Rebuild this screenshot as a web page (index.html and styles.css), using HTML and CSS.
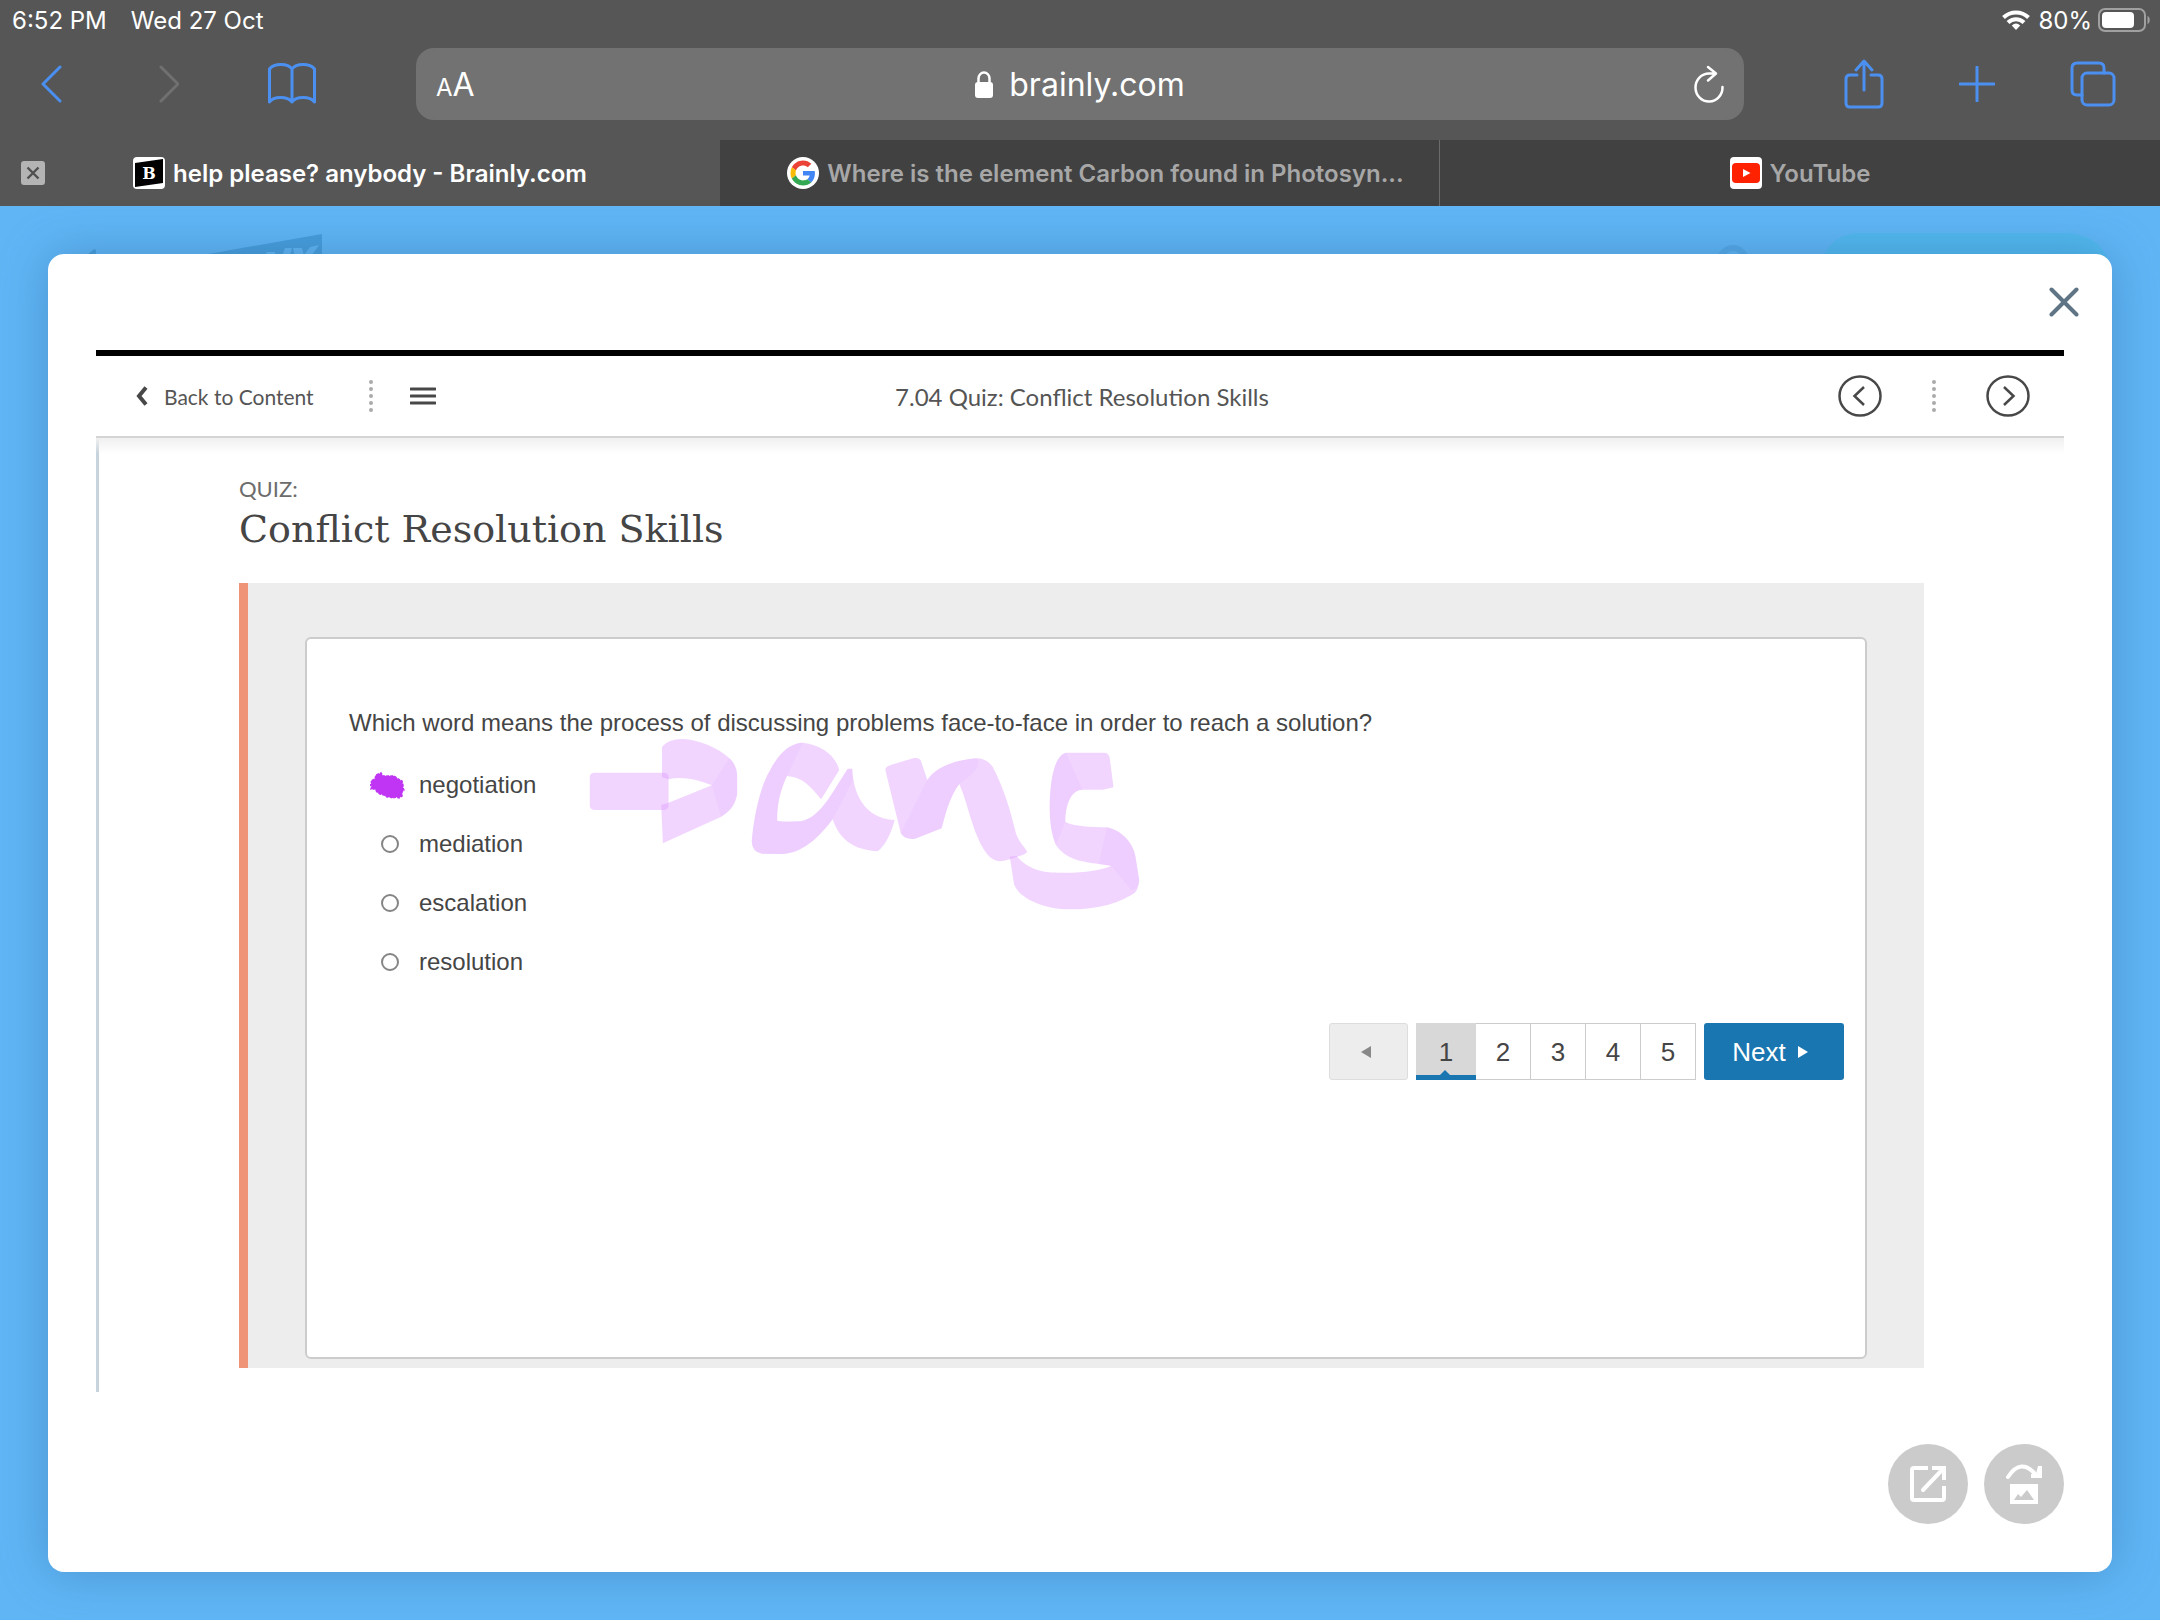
FILE: index.html
```html
<!DOCTYPE html>
<html lang="en">
<head>
<meta charset="utf-8">
<title>help please? anybody - Brainly.com</title>
<meta name="viewport" content="width=device-width, initial-scale=1">
<link rel="stylesheet" href="styles.css">
</head>
<body>
<header class="browser">
  <div class="status">
    <span class="status-time">6:52 PM</span>
    <span>Wed 27 Oct</span>
    <span class="status-right">
      <svg width="28" height="20" viewBox="0 0 28 20" fill="none" stroke="#fff" stroke-width="4"><path d="M1.500 7.500a18 18 0 0 1 25 0"/><path d="M6 12.500a11.500 11.500 0 0 1 16 0"/><path d="M14 20l-4.200-4.600a6.500 6.500 0 0 1 8.400 0z" fill="#fff" stroke="none"/></svg>
      <span class="status-percent">80%</span>
      <svg width="54" height="24" viewBox="0 0 54 24"><rect x="1" y="1" width="46" height="22" rx="6" fill="none" stroke="#a0a0a0" stroke-width="2"/><rect x="4" y="4" width="32" height="16" rx="4" fill="#fff"/><path d="M49.500 8c3 1 3 7 0 8z" fill="#a0a0a0"/></svg>
    </span>
  </div>
  <nav class="toolbar" aria-label="Browser">
    <div class="tools tools-left">
      <button class="tool" aria-label="Back"><svg width="22" height="38" viewBox="0 0 22 38"><path d="M20 2L3 19l17 17"/></svg></button>
      <button class="tool tool-off" aria-label="Forward"><svg width="28" height="38" viewBox="-8 0 28 38"><path d="M2 2l17 17L2 36"/></svg></button>
      <button class="tool" aria-label="Bookmarks"><svg width="48" height="42" viewBox="0 0 48 42"><path d="M24 6C20 0 6 0 1.500 6v33c4-6 18-6 22.500 0 4-6 18-6 22.500 0V6C42 0 28 0 24 6zV39"/></svg></button>
    </div>
    <div class="address">
      <button class="text-size" aria-label="Text size"><span class="small-a">A</span>A</button>
      <a class="site" href="#"><svg width="18" height="27" viewBox="0 0 18 27"><rect y="11" width="18" height="16" rx="3" fill="#fff"/><path d="M3.500 12V7.500a5.500 6 0 0 1 11 0V12" fill="none" stroke="#fff" stroke-width="2.500"/></svg>brainly.com</a>
      <button class="reload" aria-label="Reload"><svg width="30" height="38" viewBox="0 0 30 38" fill="none" stroke="#fff" stroke-width="2.500" stroke-linecap="round" stroke-linejoin="round"><path d="M28.500 22A13.500 14 0 1 1 15 8.500h6M14 2l8 6.500-8 7"/></svg></button>
    </div>
    <div class="tools tools-right">
      <button class="tool" aria-label="Share"><svg width="40" height="50" viewBox="0 0 40 50"><path d="M13 16H6q-4 0-4 4v24q0 4 4 4h28q4 0 4-4V20q0-4-4-4h-7M20 31V3m-8 8l8-9 8 9"/></svg></button>
      <button class="tool" aria-label="New tab"><svg width="36" height="36" viewBox="0 0 36 36"><path d="M18 1v34M1 18h34"/></svg></button>
      <button class="tool" aria-label="Show tabs"><svg width="46" height="46" viewBox="0 0 46 46"><rect x="12" y="12" width="32" height="32" rx="5"/><path d="M12 34H7q-5 0-5-5V7q0-5 5-5h22q5 0 5 5v5"/></svg></button>
    </div>
  </nav>
  <div class="tabs">
    <div class="tab tab-active">
      <button class="tab-close" aria-label="Close tab"><svg width="24" height="24" viewBox="0 0 24 24"><rect width="24" height="24" rx="3" fill="#b4b4b4"/><path d="M6.500 6.500l11 11m0-11l-11 11" stroke="#505050" stroke-width="2.400"/></svg></button>
      <a class="tab-link" href="#"><svg class="favicon" viewBox="0 0 32 32"><rect width="32" height="32" rx="4" fill="#fff"/><path d="M2 6l28-4v24L2 30z"/><text class="favicon-letter" x="16" y="22" text-anchor="middle">B</text></svg><span class="tab-name">help please? anybody - Brainly.com</span></a>
    </div>
    <div class="tab tab-long">
      <a class="tab-link" href="#"><svg class="favicon" viewBox="0 0 32 32"><circle cx="16" cy="16" r="16" fill="#fff"/><g transform="translate(3.500 3.500) scale(.52)"><path fill="#ea4335" d="M24 9.500c3.540 0 6.710 1.220 9.210 3.600l6.850-6.850C35.900 2.380 30.470 0 24 0 14.620 0 6.510 5.380 2.560 13.220l7.980 6.190C12.430 13.720 17.740 9.500 24 9.500z"/><path fill="#4285f4" d="M46.980 24.550c0-1.570-.15-3.090-.38-4.550H24v9.020h12.940c-.58 2.960-2.260 5.480-4.780 7.180l7.730 6c4.510-4.180 7.090-10.360 7.090-17.650z"/><path fill="#fbbc05" d="M10.530 28.590c-.48-1.450-.76-2.990-.76-4.590s.27-3.140.76-4.590l-7.980-6.190C.92 16.460 0 20.120 0 24c0 3.880.92 7.540 2.560 10.780z"/><path fill="#34a853" d="M24 48c6.480 0 11.930-2.130 15.890-5.810l-7.730-6c-2.150 1.450-4.920 2.300-8.160 2.300-6.260 0-11.570-4.220-13.470-9.910l-7.980 6.190C6.510 42.620 14.620 48 24 48z"/></g></svg><span class="tab-name">Where is the element Carbon found in Photosyn...</span></a>
    </div>
    <div class="tab">
      <a class="tab-link" href="#"><svg class="favicon" viewBox="0 0 32 32"><rect width="32" height="32" rx="4" fill="#fff"/><rect x="2" y="6" width="28" height="20" rx="4" fill="#f20"/><path d="M13 12l7.500 4-7.500 4z" fill="#fff"/></svg><span class="tab-name">YouTube</span></a>
    </div>
  </div>
</header>

<div class="page">
  <div class="behind" aria-hidden="true">
    <svg class="behind-logo" width="240" height="28" viewBox="0 0 240 28"><path d="M2 22l8-7 2 1v12zM79 28L238 0v28z" fill="#479edb"/><path d="M176 28l7-10h8l-1 10zM196 28l5-14h7l-4 14zM212 28l-3-14h9l2 7 6-8 9-2-12 17z" fill="#60b5f2"/></svg>
    <svg class="behind-right" width="398" height="40" viewBox="0 0 398 40"><circle cx="19" cy="28" r="13" fill="none" stroke="#55a9e6" stroke-width="6"/><path d="M104 40C108 14 124 0 146 0h204c26 0 44 14 48 40z" fill="#52b9ee"/></svg>
  </div>
  <main class="modal">
    <button class="modal-close" aria-label="Close"><svg width="30" height="30" viewBox="0 0 30 30"><path d="M2.500 2.500l25 25m0-25l-25 25" stroke="#5f7585" stroke-width="4" stroke-linecap="round"/></svg></button>
    <article class="lesson">
      <div class="lesson-bar">
        <div class="lesson-left">
          <a class="back" href="#"><svg width="14" height="20" viewBox="0 0 14 20"><path d="M12 1.500L5 10l7 8.500" fill="none" stroke="#484848" stroke-width="4"/></svg>Back to Content</a>
          <svg class="dots" width="4" height="32" viewBox="0 0 4 32"><path d="M2 2v30" stroke-dasharray="0 7"/></svg>
          <button class="plain" aria-label="Menu"><svg width="26" height="18" viewBox="0 0 26 18"><path d="M1 2h24M1 9h24M1 16h24" stroke="#484848" stroke-width="3" stroke-linecap="round"/></svg></button>
        </div>
        <h2 class="lesson-title">7.04 Quiz: Conflict Resolution Skills</h2>
        <div class="lesson-right">
          <button class="plain" aria-label="Previous lesson"><svg width="44" height="42" viewBox="0 0 44 42" fill="none" stroke="#484848" stroke-width="2.500"><ellipse cx="22" cy="21" rx="20.500" ry="19.500"/><path d="M26 12l-9.500 9L26 30"/></svg></button>
          <svg class="dots" width="4" height="32" viewBox="0 0 4 32"><path d="M2 2v30" stroke-dasharray="0 7"/></svg>
          <button class="plain" aria-label="Next lesson"><svg width="44" height="42" viewBox="0 0 44 42" fill="none" stroke="#484848" stroke-width="2.500"><ellipse cx="22" cy="21" rx="20.500" ry="19.500"/><path d="M18 12l9.500 9L18 30"/></svg></button>
        </div>
      </div>
      <div class="lesson-body">
        <p class="kicker">QUIZ:</p>
        <h1 class="heading">Conflict Resolution Skills</h1>
        <section class="quiz">
          <form class="card">
            <fieldset class="question">
              <legend class="prompt">Which word means the process of discussing problems face-to-face in order to reach a solution?</legend>
              <label class="option"><input class="radio" type="radio" name="answer" checked>negotiation
                <svg class="scribble" width="36" height="28" viewBox="0 0 36 28"><path d="M2 13l-1-3 4-2 1-4 5-2 2 3 6 0 5 0 4 3 4 2 1 4 0 3 1 2-2 2 0 4-3 2-3-1-3 1-3-1-3 0-3-2-4-1-3-2-2-3-4 0 1-3-3-1z" fill="#bf35f3" stroke="#bf35f3" stroke-width="1.500" stroke-dasharray="3 1"/></svg>
              </label>
              <label class="option"><input class="radio" type="radio" name="answer">mediation</label>
              <label class="option"><input class="radio" type="radio" name="answer">escalation</label>
              <label class="option"><input class="radio" type="radio" name="answer">resolution</label>
            </fieldset>
            <nav class="pager" aria-label="Questions">
              <button class="pager-prev" type="button" aria-label="Previous" disabled><svg width="10" height="12" viewBox="0 0 10 12"><path d="M10 0v12L0 6z" fill="#888"/></svg></button>
              <div class="pages">
                <button class="number number-current" type="button">1</button>
                <button class="number" type="button">2</button>
                <button class="number" type="button">3</button>
                <button class="number" type="button">4</button>
                <button class="number" type="button">5</button>
              </div>
              <button class="pager-next" type="button">Next<svg width="10" height="12" viewBox="0 0 10 12"><path d="M0 0v12l10-6z" fill="#fff"/></svg></button>
            </nav>
            <svg class="ink" width="640" height="240" viewBox="0 0 1568 720" preserveAspectRatio="none" aria-hidden="true">
              <g fill="#dc96ff" fill-opacity=".4">
                <rect x="73" y="248" width="193" height="112" rx="12"/>
                <path d="M250 170Q265 147 300 147C350 150 400 185 415 205Q434 225 434 260V310Q430 355 395 380L252 460 248 345 266 338 372 286Q310 255 266 268L250 262z"/>
                <path d="M595 158C640 165 675 195 684 240L640 328C620 300 600 262 556 258 540 300 532 340 532 392Q545 397 590 394C640 380 665 310 705 236L716 236C718 300 740 385 820 390 812 430 795 470 778 484 720 480 685 450 668 388 630 450 590 490 545 492L495 491Q468 485 470 450C475 380 490 290 515 240 540 180 570 158 595 158z"/>
                <path d="M797 240Q797 230 810 225L865 205Q880 202 884 212L900 270C920 230 970 210 1020 205Q1045 205 1060 230C1090 300 1105 370 1115 420 1120 450 1135 465 1145 485Q1140 497 1080 514 1060 515 1045 490C1010 430 1000 340 978 282 955 320 945 370 935 415L870 446Q845 450 835 430z"/>
                <path d="M1240 188H1335Q1345 190 1347 205L1356 292 1330 299H1280C1250 300 1238 350 1238 395 1260 410 1300 410 1340 412 1390 425 1408 480 1410 500L1419 570Q1418 605 1400 615C1350 650 1300 658 1250 658 1180 658 1120 620 1112 580L1102 500 1118 498C1150 540 1180 547 1220 548 1280 550 1330 540 1350 527L1320 522C1280 515 1240 510 1215 465 1200 420 1199 370 1200 330 1203 250 1215 195 1240 188z"/>
              </g>
              <g fill="#dc96ff" fill-opacity=".12">
                <path d="M372 286L415 205Q434 225 434 260V310Q430 355 395 380z"/>
                <path d="M595 158L556 258C540 300 532 340 532 392L590 394C640 380 665 310 705 236H716L718 270 668 388C630 450 590 490 545 492H495Q468 485 470 450C475 380 490 290 515 240 540 180 570 158 595 158z"/>
                <path d="M900 270C920 230 970 210 1020 205Q1040 230 978 282C955 320 945 370 935 415L870 446Q845 450 835 430z"/>
                <path d="M1240 188L1280 299C1250 300 1238 350 1238 395L1215 465C1200 420 1199 370 1200 330 1203 250 1215 195 1240 188zM1340 412C1390 425 1408 480 1410 500L1419 570Q1415 600 1400 600L1350 527 1320 522z"/>
              </g>
            </svg>
          </form>
        </section>
      </div>
    </article>
    <div class="actions">
      <button class="round" aria-label="Open in new window"><svg width="40" height="40" viewBox="0 0 40 40" fill="none" stroke="#fff" stroke-width="4"><path d="M20 4H6q-2 0-2 2v28q0 2 2 2h28q2 0 2-2V22"/><path d="M15 26L34 6" stroke-linecap="round"/><path d="M24 2h14v14h-4V9l-3-3h-7z" fill="#fff" stroke="none"/></svg></button>
      <button class="round" aria-label="Rotate image"><svg width="40" height="42" viewBox="0 0 40 42"><path d="M4 14Q17-6 32 12" fill="none" stroke="#fff" stroke-width="4" stroke-linecap="round"/><path d="M34 3h4v12H27v-4h5z" fill="#fff"/><path d="M6 21h28v20H6z" fill="#fff"/><path d="M10 37l4-6 3 3 6-7 7 10z" fill="#cbcbcb"/></svg></button>
    </div>
  </main>
</div>
</body>
</html>
```
FILE: styles.css
```css
* { box-sizing: border-box; }

body {
  margin: 0;
  min-height: 100vh;
  display: flex;
  flex-direction: column;
  font-family: Inter, sans-serif;
  background: #60b6f5;
}

button {
  margin: 0;
  padding: 0;
  border: 0;
  background: none;
  font: inherit;
  color: inherit;
}

a { color: inherit; text-decoration: none; }
svg { display: block; flex: none; }

/* Browser chrome */
.browser { background: #565656; color: #fff; }

.status {
  display: flex;
  align-items: center;
  height: 40px;
  padding: 0 8px 0 12px;
  font-size: 24px;
}
.status-time { margin-right: 24px; }
.status-right { display: flex; align-items: center; margin-left: auto; }
.status-percent { margin: 0 6px 0 8px; }

.toolbar {
  display: flex;
  align-items: center;
  padding: 8px 44px 20px 40px;
}
.tools { display: flex; align-items: center; justify-content: space-between; }
.tools-left { width: 276px; margin-right: 100px; }
.tools-right { width: 272px; margin-left: 100px; }
.tool svg { fill: none; stroke: #4b90f0; stroke-width: 3; stroke-linecap: round; stroke-linejoin: round; }
.tool-off svg { stroke: #707070; }

.address {
  flex: 1;
  display: grid;
  grid-template-columns: 1fr auto 1fr;
  align-items: center;
  height: 72px;
  padding: 0 20px;
  border-radius: 18px;
  background: #727272;
  font-size: 32px;
}
.text-size { justify-self: start; }
.small-a { font-size: 24px; }
.site { display: flex; align-items: center; gap: 16px; }
.reload { justify-self: end; }

.tabs { display: grid; grid-template-columns: repeat(3, 1fr); }
.tab {
  display: flex;
  align-items: center;
  justify-content: center;
  position: relative;
  min-width: 0;
  height: 66px;
  background: #414141;
  color: #a7a7a7;
  font-size: 24px;
  font-weight: 600;
}
.tab-active { background: #565656; color: #fff; }
.tab-long { padding: 0 24px 0 56px; border-right: 1px solid #6b6b6b; }
.tab-close { position: absolute; left: 21px; }
.tab-link { display: flex; align-items: center; gap: 8px; min-width: 0; }
.tab-name { white-space: nowrap; overflow: hidden; text-overflow: ellipsis; }
.favicon { width: 32px; height: 32px; }
.favicon-letter { font: 900 16px "DejaVu Serif", serif; fill: #fff; }

/* Page behind the dialog */
.page { position: relative; flex: 1; display: flex; padding: 48px; }
.behind-logo { position: absolute; left: 84px; top: 28px; }
.behind-right { position: absolute; right: 48px; top: 27px; }

/* Dialog */
.modal {
  position: relative;
  flex: 1;
  min-width: 0;
  padding: 96px 48px 48px;
  border-radius: 16px;
  background: #fff;
  box-shadow: 0 0 48px rgba(40, 95, 150, .4);
}
.modal-close { position: absolute; right: 33px; top: 33px; }

.lesson { border-top: 6px solid #000; font-family: Lato, sans-serif; }
.lesson-bar {
  position: relative;
  display: grid;
  grid-template-columns: 1fr auto 1fr;
  align-items: center;
  height: 82px;
  padding: 0 34px 0 38px;
  border-bottom: 2px solid #d4d4d4;
  color: #555;
}
.lesson-bar::after {
  content: "";
  position: absolute;
  inset: 100% 0 auto;
  height: 16px;
  margin-top: 2px;
  background: linear-gradient(#f0f0f0, #fff0);
}
.lesson-left { display: flex; align-items: center; gap: 37px; }
.lesson-right { display: flex; align-items: center; justify-content: flex-end; gap: 50px; }
.back { display: flex; align-items: center; gap: 16px; margin-right: 18px; font-size: 21px; }
.dots path { stroke: #aaa; stroke-width: 4; stroke-linecap: round; }
.lesson-title { margin: 0; font-size: 24px; font-weight: 400; }

.lesson-body {
  padding: 37px 140px 24px;
  border-left: 3px solid #c7d3dd;
}
.kicker { margin: 0; font-size: 22px; line-height: 28px; color: #6c6c6c; }
.heading {
  margin: 6px 0 34px;
  font: 400 38px/40px "DejaVu Serif", serif;
  color: #454545;
}

.quiz {
  padding: 54px 57px 9px;
  border-left: 9px solid #ef9477;
  background: #ededed;
}
.card {
  position: relative;
  padding: 68px 21px 277px 42px;
  border: 2px solid #ccc;
  border-radius: 6px;
  background: #fff;
  font: 24px/32px "Liberation Sans", Arial, sans-serif;
  color: #454545;
}
.question { margin: 0; padding: 0; border: 0; min-width: 0; }
.prompt { padding: 0; margin-bottom: 16px; }
.option {
  position: relative;
  display: flex;
  align-items: center;
  gap: 20px;
  height: 59px;
  margin-left: 32px;
}
.radio {
  appearance: none;
  width: 18px;
  height: 18px;
  margin: 0;
  border: 2px solid #858585;
  border-radius: 50%;
}
.scribble { position: absolute; left: -11px; top: 16px; }
.ink { position: absolute; left: 253px; top: 51px; pointer-events: none; }

.pager {
  display: flex;
  justify-content: flex-end;
  gap: 8px;
  height: 57px;
  margin-top: 32px;
  font-size: 26px;
}
.pager-prev {
  display: grid;
  place-items: center;
  width: 79px;
  padding-right: 6px;
  border: 1px solid #ddd;
  border-radius: 3px;
  background: #ededed;
}
.pages { display: flex; }
.number {
  width: 55px;
  border: 1px solid #ccc;
  border-left: 0;
}
.number-current {
  position: relative;
  width: 60px;
  border: 0;
  background: #d8d8d8;
  box-shadow: inset 0 -5px #1a76b0;
}
.number-current::after {
  content: "";
  position: absolute;
  left: 24px;
  bottom: 5px;
  border: 5px solid transparent;
  border-top: 0;
  border-bottom-color: #1a76b0;
}
.pager-next {
  display: flex;
  align-items: center;
  justify-content: center;
  gap: 12px;
  width: 140px;
  padding-right: 8px;
  border-radius: 3px;
  background: #1a76b0;
  color: #fff;
}

.actions { display: flex; justify-content: flex-end; gap: 16px; margin-top: 52px; }
.round {
  display: grid;
  place-items: center;
  width: 80px;
  height: 80px;
  border-radius: 50%;
  background: #cbcbcb;
}
```
